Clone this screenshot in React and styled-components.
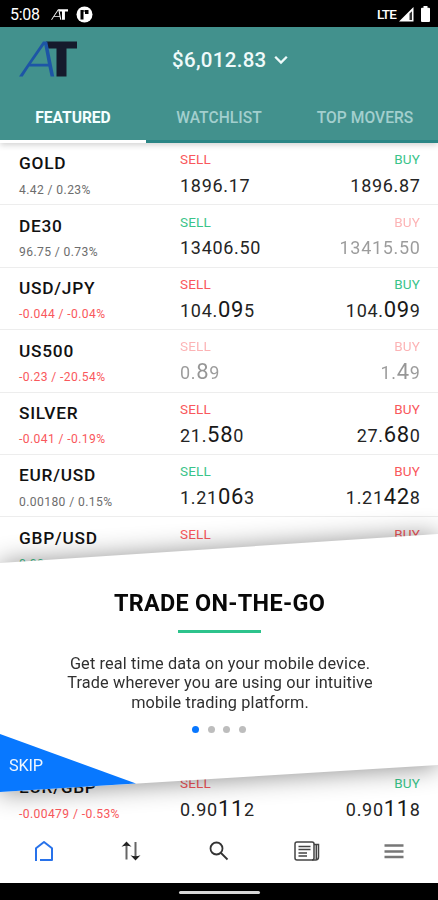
import React from 'react'
import styled, { createGlobalStyle } from 'styled-components'

const RED = '#f9585c'
const GREEN = '#3ac48a'

const GlobalStyle = createGlobalStyle`
  * {
    box-sizing: border-box;
  }
  body {
    margin: 0;
    background: #fff;
    font-family: Roboto, sans-serif;
    color: #111;
  }
`

const Screen = styled.div`
  position: relative;
  display: flex;
  flex-direction: column;
  width: 438px;
  height: 900px;
  overflow: hidden;
  background: #fff;
`

const StatusBar = styled.div`
  flex: none;
  display: flex;
  align-items: center;
  justify-content: space-between;
  height: 27px;
  padding: 1px 8px 0 10px;
  background: #000;
  color: #fff;
`

const StatusGroup = styled.div`
  display: flex;
  align-items: center;
`

const Clock = styled.span`
  width: 41px;
  font-size: 16px;
  line-height: 27px;
  letter-spacing: -0.3px;
`

const Lte = styled.span`
  font-size: 13.5px;
  font-weight: 500;
  line-height: 27px;
  letter-spacing: -0.8px;
  margin-right: 3px;
`

const Header = styled.header`
  flex: none;
  position: relative;
  z-index: 1;
  height: 116px;
  background: #42918d;
  box-shadow: 0 2px 6px rgba(0, 0, 0, 0.18);
`

const HeaderTop = styled.div`
  display: grid;
  grid-template-columns: 153px 1fr 152px;
  align-items: center;
  height: 64px;
  padding-left: 19px;
`

const Balance = styled.div`
  display: flex;
  align-items: center;
  gap: 7px;
  padding-top: 1px;
  color: #effafa;
  font-size: 20.5px;
  font-weight: 500;
  letter-spacing: 0.3px;
  white-space: nowrap;
`

const Tabs = styled.nav`
  display: flex;
  height: 52px;
`

const Tab = styled.div`
  flex: 1;
  padding-bottom: 1px;
  border-bottom: 3px solid ${p => p.$active ? '#fff' : '#2a8585'};
  color: ${p => p.$active ? '#f4ffff' : '#a3cfce'};
  font-size: 15.6px;
  font-weight: ${p => p.$active ? 700 : 500};
  letter-spacing: ${p => p.$active ? '-0.05px' : '0.05px'};
  line-height: 54px;
  text-align: center;
`

const List = styled.main`
  flex: 1;
  overflow: hidden;
  background: #fff;
`

const Row = styled.div`
  display: grid;
  grid-template-columns: 161px 1fr 1fr;
  height: 62.4px;
  padding: 0 18px 0 19px;
  border-bottom: 1.6px solid #ededed;
`

const CoveredRows = styled.div`
  height: ${p => p.$count * 62.4}px;
`

const Symbol = styled.div`
  padding-top: 8.4px;
  font-size: 17.3px;
  font-weight: 500;
  line-height: 24px;
  letter-spacing: 0.75px;
`

const Change = styled.div`
  margin-top: 5.2px;
  font-size: 12.1px;
  line-height: 18px;
  letter-spacing: 0.4px;
  color: ${p => p.$color || '#6d6d6d'};
`

const Quote = styled.div`
  text-align: ${p => p.$right ? 'right' : 'left'};
  opacity: ${p => p.$dim ? 0.45 : 1};
`

const Side = styled.div`
  padding-top: 7.2px;
  font-size: 13.5px;
  line-height: 18px;
  letter-spacing: 0.15px;
  color: ${p => p.$color};
`

const Price = styled.div`
  height: 26px;
  margin-top: 3.8px;
  font-size: 18px;
  line-height: 27px;
  letter-spacing: 0.7px;
  margin-right: -0.7px;
  color: #252525;
`

const Pips = styled.span`
  font-size: 22px;
  line-height: 20px;
  color: #181818;
`

const Onboarding = styled.section`
  position: absolute;
  top: 534px;
  left: 0;
  z-index: 2;
  width: 438px;
  height: 258px;
  filter: drop-shadow(0 1px 13px rgba(0, 0, 0, 0.45));
`

const Sheet = styled.div`
  display: flex;
  flex-direction: column;
  align-items: center;
  height: 258px;
  padding-top: 54px;
  background: #fff;
  clip-path: polygon(0 29px, 100% 0, 100% 231px, 0 100%);
`

const Title = styled.h1`
  margin: 0;
  padding-left: 1px;
  font-size: 23.4px;
  font-weight: 700;
  line-height: 30px;
  letter-spacing: 0.3px;
  color: #080808;
`

const Rule = styled.div`
  width: 83px;
  height: 3px;
  margin-top: 11.5px;
  background: #2dc38c;
`

const Copy = styled.p`
  margin: 21px 0 0;
  padding-left: 2px;
  font-size: 16.3px;
  line-height: 19.6px;
  letter-spacing: 0.14px;
  text-align: center;
  color: #303030;
`

const Dots = styled.div`
  display: flex;
  gap: 8.7px;
  margin-top: 14px;
`

const Dot = styled.span`
  width: 7px;
  height: 7px;
  border-radius: 50%;
  background: ${p => p.$active ? '#0877ff' : '#bdbdbd'};
`

const Skip = styled.div`
  position: absolute;
  left: 0;
  bottom: 0;
  width: 136px;
  height: 58px;
  padding: 19px 0 0 9px;
  background: #0878ff;
  clip-path: polygon(0 0, 100% 49.6px, 0 100%);
  color: #eef6ff;
  font-size: 16.3px;
  line-height: 25px;
  letter-spacing: -0.2px;
`

const BottomNav = styled.nav`
  flex: none;
  position: relative;
  z-index: 3;
  display: grid;
  grid-template-columns: repeat(5, 1fr);
  place-items: center;
  height: 63px;
  padding-bottom: 1px;
  background: #fff;
`

const GestureBar = styled.div`
  flex: none;
  display: flex;
  align-items: center;
  justify-content: center;
  height: 17px;
  padding-top: 1px;
  background: #000;
`

const Handle = styled.div`
  width: 81px;
  height: 3px;
  border-radius: 2px;
  background: #d8d8d8;
`

const SignalIcon = styled.svg`
  margin-right: 7px;
`

const AppIcon = styled.svg`
  margin-left: 8px;
`

// first part, enlarged part, trailing digit
const rows = [
  { name: 'GOLD', change: '4.42 / 0.23%', sell: ['1896.17'], buy: ['1896.87'], sellColor: RED, buyColor: GREEN },
  { name: 'DE30', change: '96.75 / 0.73%', sell: ['13406.50'], buy: ['13415.50'], sellColor: GREEN, buyColor: RED, dimBuy: true },
  { name: 'USD/JPY', change: '-0.044 / -0.04%', down: true, sell: ['104.', '09', '5'], buy: ['104.', '09', '9'], sellColor: RED, buyColor: GREEN },
  { name: 'US500', change: '-0.23 / -20.54%', down: true, sell: ['0.', '8', '9'], buy: ['1.', '4', '9'], sellColor: RED, buyColor: RED, dimSell: true, dimBuy: true },
  { name: 'SILVER', change: '-0.041 / -0.19%', down: true, sell: ['21.', '58', '0'], buy: ['27.', '68', '0'], sellColor: RED, buyColor: RED },
  { name: 'EUR/USD', change: '0.00180 / 0.15%', sell: ['1.21', '06', '3'], buy: ['1.21', '42', '8'], sellColor: GREEN, buyColor: RED },
  { name: 'GBP/USD', change: '0.00', up: true, sellColor: RED, buyColor: RED },
]

const lastRow = { name: 'EUR/GBP', change: '-0.00479 / -0.53%', down: true, sell: ['0.90', '11', '2'], buy: ['0.90', '11', '8'], sellColor: RED, buyColor: GREEN }

const PriceText = ({ parts }) => (
  <Price>
    {parts[0]}{parts[1] && <Pips>{parts[1]}</Pips>}{parts[2]}
  </Price>
)

const QuoteRow = ({ row }) => (
  <Row>
    <div>
      <Symbol>{row.name}</Symbol>
      <Change $color={row.down ? RED : row.up ? GREEN : null}>{row.change}</Change>
    </div>
    <Quote $dim={row.dimSell}>
      <Side $color={row.sellColor}>SELL</Side>
      {row.sell && <PriceText parts={row.sell} />}
    </Quote>
    <Quote $right $dim={row.dimBuy}>
      <Side $color={row.buyColor}>BUY</Side>
      {row.buy && <PriceText parts={row.buy} />}
    </Quote>
  </Row>
)

const Logo = ({ width, height, a, t }) => (
  <svg width={width} height={height} viewBox="0 0 58 36" fill="none">
    <path d="M27 0.5h31v7H47.5v28H37.5v-28H28.5z" fill={t} />
    <path d="M0 35.5 24 0.500h4.200l7 35h-3.600L29.400 25.500H10.200L3.700 35.500zM12 22.700h16.900L25.300 3.800z" fill={a} fillRule="evenodd" />
  </svg>
)

const App = () => (
  <>
    <GlobalStyle />
    <Screen>
      <StatusBar>
        <StatusGroup>
          <Clock>5:08</Clock>
          <Logo width={17} height={11} a="#fff" t="#fff" />
          <AppIcon width="17" height="17" viewBox="0 0 17 17">
            <circle cx="8.5" cy="8.5" r="8" fill="#fff" />
            <path d="M4.500 4h3v9.500h-3zM9 4h3.500v4H9z" fill="#000" />
            <path d="M7 5h2" stroke="#000" />
          </AppIcon>
        </StatusGroup>
        <StatusGroup>
          <Lte>LTE</Lte>
          <SignalIcon width="15" height="15" viewBox="0 0 15 15">
            <path d="M0 14.5 14.5 0v14.5z" fill="#fff" />
            <path d="M10.5 6.5 13 4.2V13h-2.5z" fill="#333" />
          </SignalIcon>
          <svg width="9" height="16" viewBox="0 0 9 16">
            <path d="M2.500 0h4v1.700H8q1 0 1 1V15q0 1-1 1H1q-1 0-1-1V2.700q0-1 1-1h1.500z" fill="#fff" />
          </svg>
        </StatusGroup>
      </StatusBar>

      <Header>
        <HeaderTop>
          <Logo width={58} height={36} a="#1d55a6" t="#151a2c" />
          <Balance>
            $6,012.83
            <svg width="14" height="10" viewBox="0 0 14 10" fill="none">
              <path d="m1.200 1.700 5.800 5.800 5.800-5.800" stroke="#effafa" strokeWidth="2.300" />
            </svg>
          </Balance>
        </HeaderTop>
        <Tabs>
          <Tab $active>FEATURED</Tab>
          <Tab>WATCHLIST</Tab>
          <Tab>TOP MOVERS</Tab>
        </Tabs>
      </Header>

      <List>
        {rows.map(row => <QuoteRow key={row.name} row={row} />)}
        <CoveredRows $count={3} />
        <QuoteRow row={lastRow} />
      </List>

      <Onboarding>
        <Sheet>
          <Title>TRADE ON-THE-GO</Title>
          <Rule />
          <Copy>
            Get real time data on your mobile device.<br />
            Trade wherever you are using our intuitive<br />
            mobile trading platform.
          </Copy>
          <Dots>
            <Dot $active />
            <Dot />
            <Dot />
            <Dot />
          </Dots>
        </Sheet>
        <Skip>SKIP</Skip>
      </Onboarding>

      <BottomNav>
        <svg width="20" height="22" viewBox="0 0 20 22" fill="none" stroke="#2872ea" strokeWidth="2">
          <path d="M2 21V8.200L10 2l8 6.200V20H6" strokeLinejoin="round" />
        </svg>
        <svg width="20" height="20" viewBox="0 0 20 20" fill="none">
          <path d="M5.500 18.500V3M14.500 1v15" stroke="#666" strokeWidth="2" />
          <path d="m5.500 0.500 5 5.300q-5-2-10 0zM14.500 19.500l-5-5.300q5 2 10 0z" fill="#222" />
        </svg>
        <svg width="20" height="20" viewBox="0 0 20 20" fill="none" stroke="#333" strokeWidth="1.800">
          <circle cx="7.500" cy="7.500" r="6" />
          <path d="m12 12 6.500 6.500" />
        </svg>
        <svg width="26" height="20" viewBox="0 0 26 20" fill="none" stroke="#444" strokeWidth="1.500">
          <rect x="1" y="1" width="19" height="18" rx="2" />
          <path d="M20 3.500h4.500V16q0 3-3 3H18M22.300 4v14M4.500 5.500h12M4.500 8.500h12M4.500 12h8.500M4.500 15h8.500" />
        </svg>
        <svg width="20" height="16" viewBox="0 0 20 16" fill="none" stroke="#777" strokeWidth="2.300">
          <path d="M.5 2.500h19M.5 8.500h19M.5 14h19" />
        </svg>
      </BottomNav>
      <GestureBar>
        <Handle />
      </GestureBar>
    </Screen>
  </>
)

export default App
